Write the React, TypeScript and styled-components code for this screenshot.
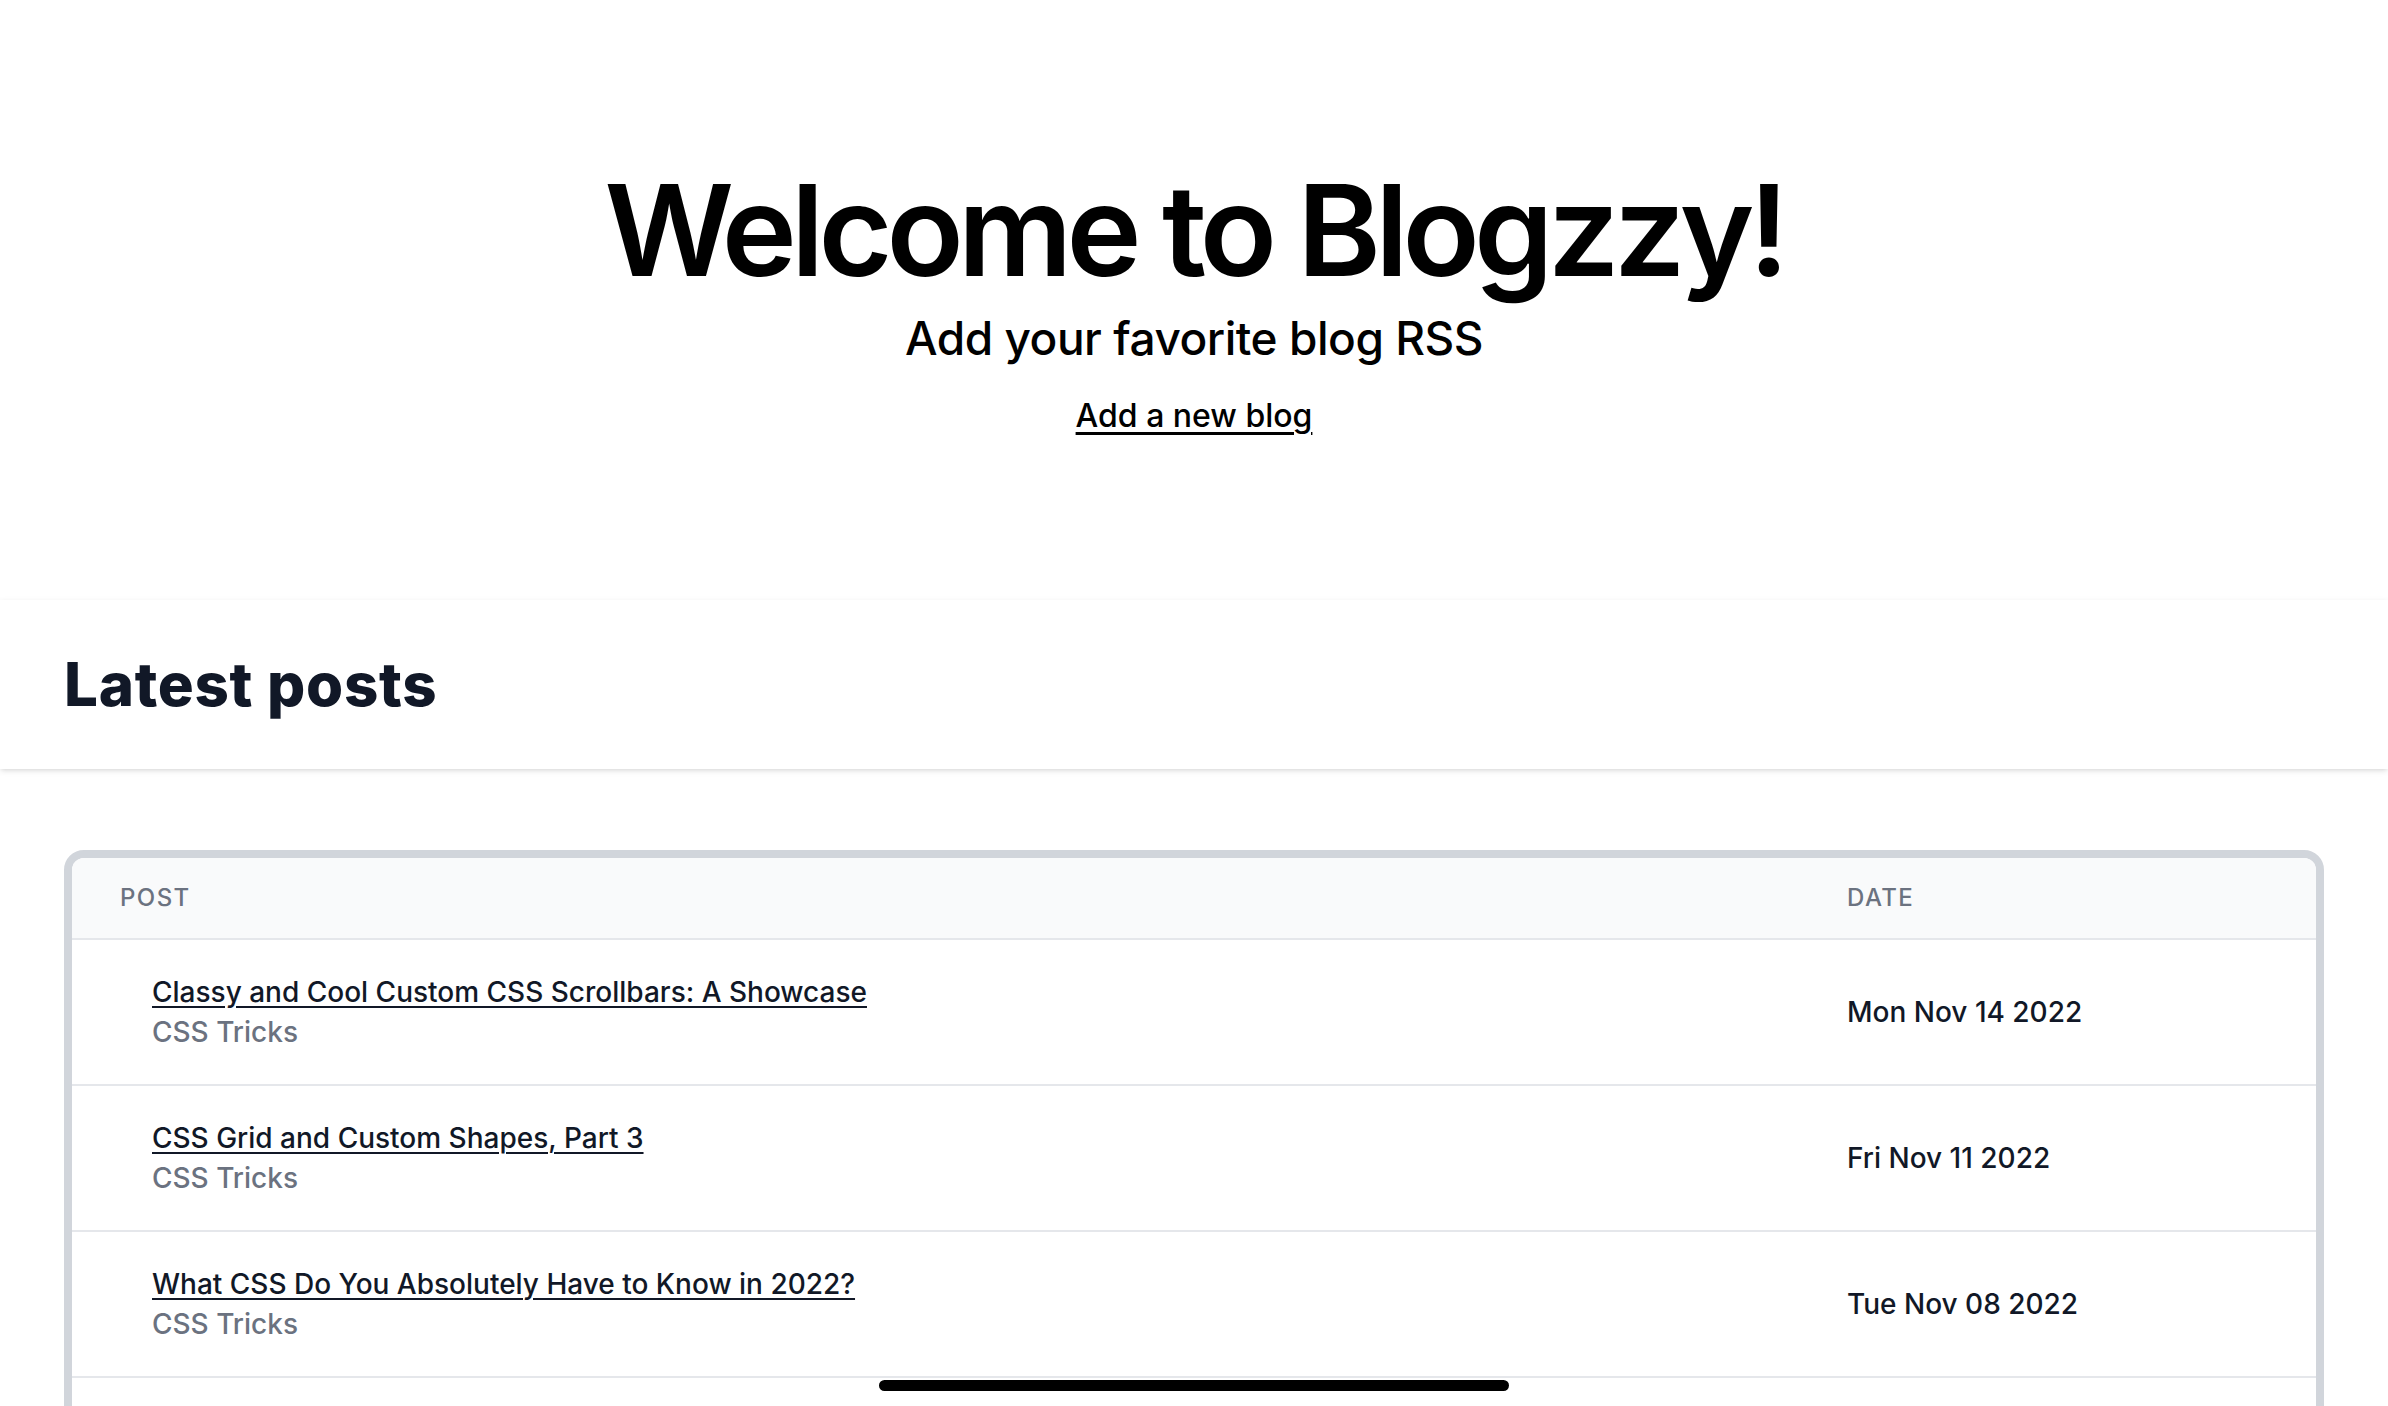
import React from "react";
import styled, { createGlobalStyle } from "styled-components";

const GlobalStyle = createGlobalStyle`
  html, body {
    margin: 0;
    padding: 0;
    background: #ffffff;
    overflow: hidden;
    font-family: Inter, "Noto Sans", "Liberation Sans", sans-serif;
    -webkit-font-smoothing: antialiased;
  }
  * { box-sizing: border-box; }
`;

const Page = styled.div`
  width: 100%;
  min-height: 100vh;
  display: flex;
  flex-direction: column;
  background: #ffffff;
`;

const Hero = styled.section`
  display: flex;
  flex-direction: column;
  align-items: center;
  padding: 166px 0 160px;
  color: #000000;
`;

const Title = styled.h1`
  margin: 0;
  font-size: 127px;
  line-height: 128px;
  font-weight: 600;
  letter-spacing: -0.046em;
`;

const Subtitle = styled.p`
  margin: 12px 0 0;
  font-size: 46px;
  line-height: 64px;
  font-weight: 500;
  letter-spacing: -0.01em;
`;

const AddLink = styled.a`
  margin-top: 22px;
  font-size: 32px;
  line-height: 48px;
  font-weight: 500;
  color: #000000;
  text-decoration: underline;
  text-underline-offset: 5px;
  text-decoration-thickness: 3px;
  cursor: pointer;
`;

const SectionHeader = styled.header`
  background: #ffffff;
  padding: 48px 64px 49px;
  box-shadow: 0 2px 6px 0 rgba(0, 0, 0, 0.1), 0 2px 4px -2px rgba(0, 0, 0, 0.1);
  position: relative;
  z-index: 1;
`;

const SectionTitle = styled.h2`
  margin: 0;
  font-size: 60px;
  line-height: 72px;
  font-weight: 800;
  color: #111827;
  letter-spacing: 0.012em;
`;

const Main = styled.main`
  padding: 81px 64px 64px;
`;

const Card = styled.div`
  border: 8px solid #d1d5db;
  border-radius: 20px;
  overflow: hidden;
  background: #ffffff;
`;

const Row = styled.div<{ $head?: boolean }>`
  display: grid;
  grid-template-columns: 1fr 517px;
  align-items: center;
  background: ${(p) => (p.$head ? "#f9fafb" : "#ffffff")};
  border-bottom: 2px solid #e5e7eb;
`;

const HeadCell = styled.div`
  padding: 24px 48px;
  font-size: 24px;
  line-height: 32px;
  font-weight: 500;
  letter-spacing: 0.06em;
  text-transform: uppercase;
  color: #6b7280;
`;

const Cell = styled.div`
  padding: 32px 48px;
  display: flex;
  flex-direction: column;
`;

const PostInfo = styled.div`
  margin-left: 32px;
  display: flex;
  flex-direction: column;
`;

const PostLink = styled.a`
  font-size: 28px;
  line-height: 40px;
  font-weight: 500;
  color: #111827;
  text-decoration: underline;
  text-underline-offset: 4px;
  text-decoration-thickness: 2px;
  cursor: pointer;
  align-self: flex-start;
`;

const Source = styled.span`
  font-size: 28px;
  line-height: 40px;
  font-weight: 500;
  color: #6b7280;
`;

const DateText = styled.span`
  font-size: 28px;
  line-height: 40px;
  font-weight: 500;
  color: #111827;
`;

const HomeIndicator = styled.div`
  position: fixed;
  left: 50%;
  bottom: 15px;
  transform: translateX(-50%);
  width: 630px;
  height: 11px;
  border-radius: 6px;
  background: #000000;
  z-index: 10;
`;

const posts = [
  { title: "Classy and Cool Custom CSS Scrollbars: A Showcase", source: "CSS Tricks", date: "Mon Nov 14 2022" },
  { title: "CSS Grid and Custom Shapes, Part 3", source: "CSS Tricks", date: "Fri Nov 11 2022" },
  { title: "What CSS Do You Absolutely Have to Know in 2022?", source: "CSS Tricks", date: "Tue Nov 08 2022" },
  { title: "CSS Grid and Custom Shapes, Part 2", source: "CSS Tricks", date: "Fri Nov 04 2022" },
  { title: "Making Calendars With Accessibility and Internationalization in Mind", source: "CSS Tricks", date: "Wed Nov 02 2022" },
];

export default function App() {
  return (
    <Page>
      <GlobalStyle />
      <Hero>
        <Title>Welcome to Blogzzy!</Title>
        <Subtitle>Add your favorite blog RSS</Subtitle>
        <AddLink>Add a new blog</AddLink>
      </Hero>
      <SectionHeader>
        <SectionTitle>Latest posts</SectionTitle>
      </SectionHeader>
      <Main>
        <Card>
          <Row $head>
            <HeadCell>Post</HeadCell>
            <HeadCell>Date</HeadCell>
          </Row>
          {posts.map((p) => (
            <Row key={p.title}>
              <Cell>
                <PostInfo>
                  <PostLink>{p.title}</PostLink>
                  <Source>{p.source}</Source>
                </PostInfo>
              </Cell>
              <Cell>
                <DateText>{p.date}</DateText>
              </Cell>
            </Row>
          ))}
        </Card>
      </Main>
      <HomeIndicator />
    </Page>
  );
}
